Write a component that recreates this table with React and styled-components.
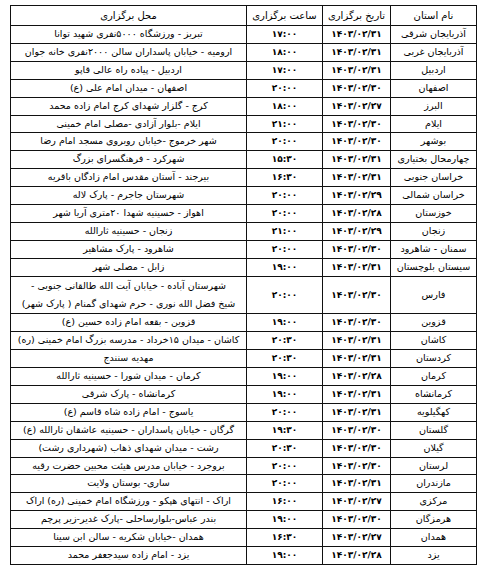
import React from "react";
import styled, { createGlobalStyle } from "styled-components";

const GlobalStyle = createGlobalStyle`
  html, body {
    margin: 0;
    padding: 0;
    background: #ffffff;
  }
`;

const Page = styled.div`
  padding: 5px 0 0 10px;
  font-family: "DejaVu Sans", sans-serif;
  color: #000;
`;

const Table = styled.table`
  direction: rtl;
  border-collapse: collapse;
  width: 462px;
  table-layout: fixed;
  font-size: 9.5px;
`;

const HeadCell = styled.th`
  border: 1px solid #111;
  font-weight: normal;
  font-size: 10px;
  line-height: 19px;
  padding: 0;
  text-align: center;
  vertical-align: middle;
  width: ${(p) => p.w}px;
`;

const Cell = styled.td`
  border: 1px solid #111;
  padding: 0;
  text-align: center;
  vertical-align: middle;
  white-space: nowrap;
  overflow: hidden;
  line-height: ${(p) => (p.tall ? "18.3px" : "16.9px")};
`;

const NameCell = styled(Cell)`
  font-size: 9.6px;
`;

const Num = styled.span`
  font-weight: bold;
  font-size: 9px;
  line-height: 1;
`;

const rows = [
  ["آذربایجان شرقی", "۱۴۰۳/۰۲/۳۱", "۱۷:۰۰", "تبریز - ورزشگاه ۵۰۰۰نفری شهید توانا"],
  ["آذربایجان غربی", "۱۴۰۳/۰۲/۳۱", "۱۸:۰۰", "ارومیه - خیابان پاسداران سالن ۲۰۰۰نفری خانه جوان"],
  ["اردبیل", "۱۴۰۳/۰۲/۳۱", "۱۷:۰۰", "اردبیل - پیاده راه عالی قاپو"],
  ["اصفهان", "۱۴۰۳/۰۲/۳۰", "۲۰:۰۰", "اصفهان - میدان امام علی (ع)"],
  ["البرز", "۱۴۰۳/۰۲/۲۷", "۱۸:۰۰", "کرج - گلزار شهدای  کرج امام زاده محمد"],
  ["ایلام", "۱۴۰۳/۰۲/۳۰", "۲۱:۰۰", "ایلام -بلوار آزادی -مصلی امام خمینی"],
  ["بوشهر", "۱۴۰۳/۰۲/۳۰", "۲۰:۰۰", "شهر خرموج -خیابان روبروی مسجد امام رضا"],
  ["چهارمحال بختیاری", "۱۴۰۳/۰۲/۳۱", "۱۵:۳۰", "شهرکرد - فرهنگسرای بزرگ"],
  ["خراسان جنوبی", "۱۴۰۳/۰۲/۳۱", "۱۶:۳۰", "بیرجند - آستان مقدس امام زادگان باقریه"],
  ["خراسان شمالی", "۱۴۰۳/۰۲/۲۹", "۲۰:۰۰", "شهرستان جاجرم - پارک لاله"],
  ["خوزستان", "۱۴۰۳/۰۲/۲۸", "۲۰:۰۰", "اهواز - حسینیه شهدا ۲۰متری آریا شهر"],
  ["زنجان", "۱۴۰۳/۰۲/۲۹", "۲۱:۰۰", "زنجان - حسینیه ثارالله"],
  ["سمنان - شاهرود", "۱۴۰۳/۰۲/۳۰", "۲۰:۰۰", "شاهرود - پارک مشاهیر"],
  ["سیستان بلوچستان", "۱۴۰۳/۰۲/۳۱", "۱۹:۰۰", "زابل - مصلی شهر"],
  [
    "فارس",
    "۱۴۰۳/۰۲/۳۰",
    "۲۰:۰۰",
    ["شهرستان آباده - خیابان آیت الله طالقانی جنوبی -", "شیخ فضل الله نوری - حرم شهدای گمنام ( پارک شهر)"],
  ],
  ["قزوین", "۱۴۰۳/۰۲/۳۰", "۱۹:۰۰", "قزوین - بقعه امام زاده حسین (ع)"],
  ["کاشان", "۱۴۰۳/۰۲/۳۱", "۲۰:۳۰", "کاشان - میدان ۱۵خرداد - مدرسه بزرگ امام خمینی (ره)"],
  ["کردستان", "۱۴۰۳/۰۲/۳۱", "۲۰:۳۰", "مهدیه سنندج"],
  ["کرمان", "۱۴۰۳/۰۲/۲۸", "۱۹:۰۰", "کرمان - میدان شورا - حسینیه ثارالله"],
  ["کرمانشاه", "۱۴۰۳/۰۲/۳۱", "۱۹:۰۰", "کرمانشاه - پارک شرقی"],
  ["کهگیلویه", "۱۴۰۳/۰۲/۳۱", "۲۰:۰۰", "یاسوج - امام زاده شاه قاسم (ع)"],
  ["گلستان", "۱۴۰۳/۰۲/۳۰", "۱۹:۳۰", "گرگان - خیابان پاسداران - حسینیه عاشقان ثارالله (ع)"],
  ["گیلان", "۱۴۰۳/۰۲/۳۰", "۲۰:۳۰", "رشت - میدان شهدای ذهاب (شهرداری رشت)"],
  ["لرستان", "۱۴۰۳/۰۲/۳۰", "۲۰:۰۰", "بروجرد - خیابان مدرس هیئت محبین حضرت رقیه"],
  ["مازندران", "۱۴۰۳/۰۲/۳۱", "۲۰:۰۰", "ساری- بوستان ولایت"],
  ["مرکزی", "۱۴۰۳/۰۲/۲۷", "۱۶:۰۰", "اراک - انتهای هپکو - ورزشگاه امام خمینی (ره) اراک"],
  ["هرمزگان", "۱۴۰۳/۰۲/۳۰", "۱۹:۰۰", "بندر عباس-بلوارساحلی -پارک غدیر-زیر پرچم"],
  ["همدان", "۱۴۰۳/۰۲/۲۷", "۱۶:۳۰", "همدان -خیابان شکریه - سالن ابن سینا"],
  ["یزد", "۱۴۰۳/۰۲/۲۸", "۱۹:۰۰", "یزد - امام زاده سیدجعفر محمد"],
];

export default function App() {
  return (
    <Page>
      <GlobalStyle />
      <Table>
        <thead>
          <tr>
            <HeadCell w={85}>نام استان</HeadCell>
            <HeadCell w={67}>تاریخ برگزاری</HeadCell>
            <HeadCell w={75}>ساعت برگزاری</HeadCell>
            <HeadCell w={235}>محل برگزاری</HeadCell>
          </tr>
        </thead>
        <tbody>
          {rows.map(([name, date, time, place]) => {
            const tall = Array.isArray(place);
            return (
              <tr key={name}>
                <NameCell tall={tall}>{name}</NameCell>
                <Cell tall={tall}>
                  <Num>{date}</Num>
                </Cell>
                <Cell tall={tall}>
                  <Num>{time}</Num>
                </Cell>
                <Cell tall={tall}>
                  {tall ? (
                    <>
                      {place[0]}
                      <br />
                      {place[1]}
                    </>
                  ) : (
                    place
                  )}
                </Cell>
              </tr>
            );
          })}
        </tbody>
      </Table>
    </Page>
  );
}
